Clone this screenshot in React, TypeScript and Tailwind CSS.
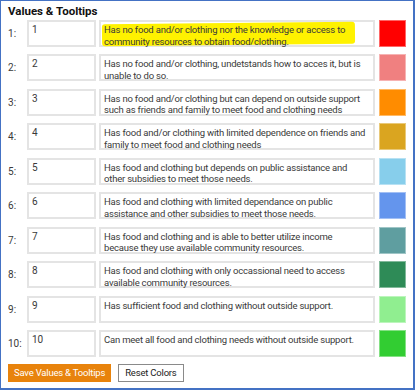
const rows: { value: string; lines: string[]; color: string }[] = [
  {
    value: '1',
    lines: ['Has no food and/or clothing nor the knowledge or access to', 'community resources to obtain food/clothing.'],
    color: 'bg-[#ff0000]',
  },
  {
    value: '2',
    lines: ['Has no food and/or clothing, undetstands how to acces it, but is', 'unable to do so.'],
    color: 'bg-[#f08080]',
  },
  {
    value: '3',
    lines: ['Has no food and/or clothing but can depend on outside support', 'such as friends and family to meet food and clothing needs'],
    color: 'bg-[#ff8c00]',
  },
  {
    value: '4',
    lines: ['Has food and/or clothing with limited dependence on friends and', 'family to meet food and clothing needs'],
    color: 'bg-[#daa520]',
  },
  {
    value: '5',
    lines: ['Has food and clothing but depends on public assistance and', 'other subsidies to meet those needs.'],
    color: 'bg-[#87ceeb]',
  },
  {
    value: '6',
    lines: ['Has food and clothing with limited dependance on public', 'assistance and other subsidies to meet those needs.'],
    color: 'bg-[#6495ed]',
  },
  {
    value: '7',
    lines: ['Has food and clothing and is able to better utilize income', 'because they use available community resources.'],
    color: 'bg-[#5f9ea0]',
  },
  {
    value: '8',
    lines: ['Has food and clothing with only occassional need to access', 'available community resources.'],
    color: 'bg-[#2e8b57]',
  },
  {
    value: '9',
    lines: ['Has sufficient food and clothing without outside support.'],
    color: 'bg-[#90ee90]',
  },
  {
    value: '10',
    lines: ['Can meet all food and clothing needs without outside support.'],
    color: 'bg-[#32cd32]',
  },
];

export default function App() {
  return (
    <div className="w-[416px] h-[390px] bg-white font-[family-name:Roboto,sans-serif]">
      <div className="w-[415px] h-[390px] border-t border-l border-r-2 border-b-2 border-[#4472c4] px-[7px] pt-[1px]">
        <div className="text-[11.5px] font-bold text-[#111] leading-[18px]">Values &amp; Tooltips</div>
        <div className="flex flex-col gap-[7.44px]">
          {rows.map((row, i) => (
            <div key={row.value} className="flex items-center h-[27px]">
              <div className="w-[19px] text-[10px] text-[#3a3a3a]">{row.value}:</div>
              <div className="w-[69px] h-full border-2 border-[#e4e4e4] px-[3px] pt-[2px] text-[10px] leading-[12px] text-[#3a3a3a]">
                {row.value}
              </div>
              <div className="relative ml-[3px] w-[276px] h-full border-2 border-[#e4e4e4] pl-[3px] pt-[2px] text-[9.5px] tracking-[-0.2px] leading-[11.5px] text-[#3a3a3a]">
                {i === 0 && (
                  <div className="absolute left-[1px] top-[1px] w-[253px] h-[22px] bg-[#fff200] rounded-[3px] -rotate-[0.6deg]" />
                )}
                {row.lines.map((line) => (
                  <div key={line} className="relative whitespace-nowrap">
                    {line}
                  </div>
                ))}
              </div>
              <div className={`ml-[4px] w-[27px] h-full border border-white/40 ${row.color}`} />
            </div>
          ))}
        </div>
        <div className="mt-[7px] flex gap-[7px]">
          <button className="h-[18px] px-[6px] bg-[#e8830c] text-white text-[9.5px] tracking-[-0.2px] leading-none">
            Save Values &amp; Tooltips
          </button>
          <button className="h-[18px] px-[6px] bg-white border border-[#8a8a8a] text-[#222] text-[9.5px] tracking-[-0.2px] leading-none">
            Reset Colors
          </button>
        </div>
      </div>
    </div>
  );
}
